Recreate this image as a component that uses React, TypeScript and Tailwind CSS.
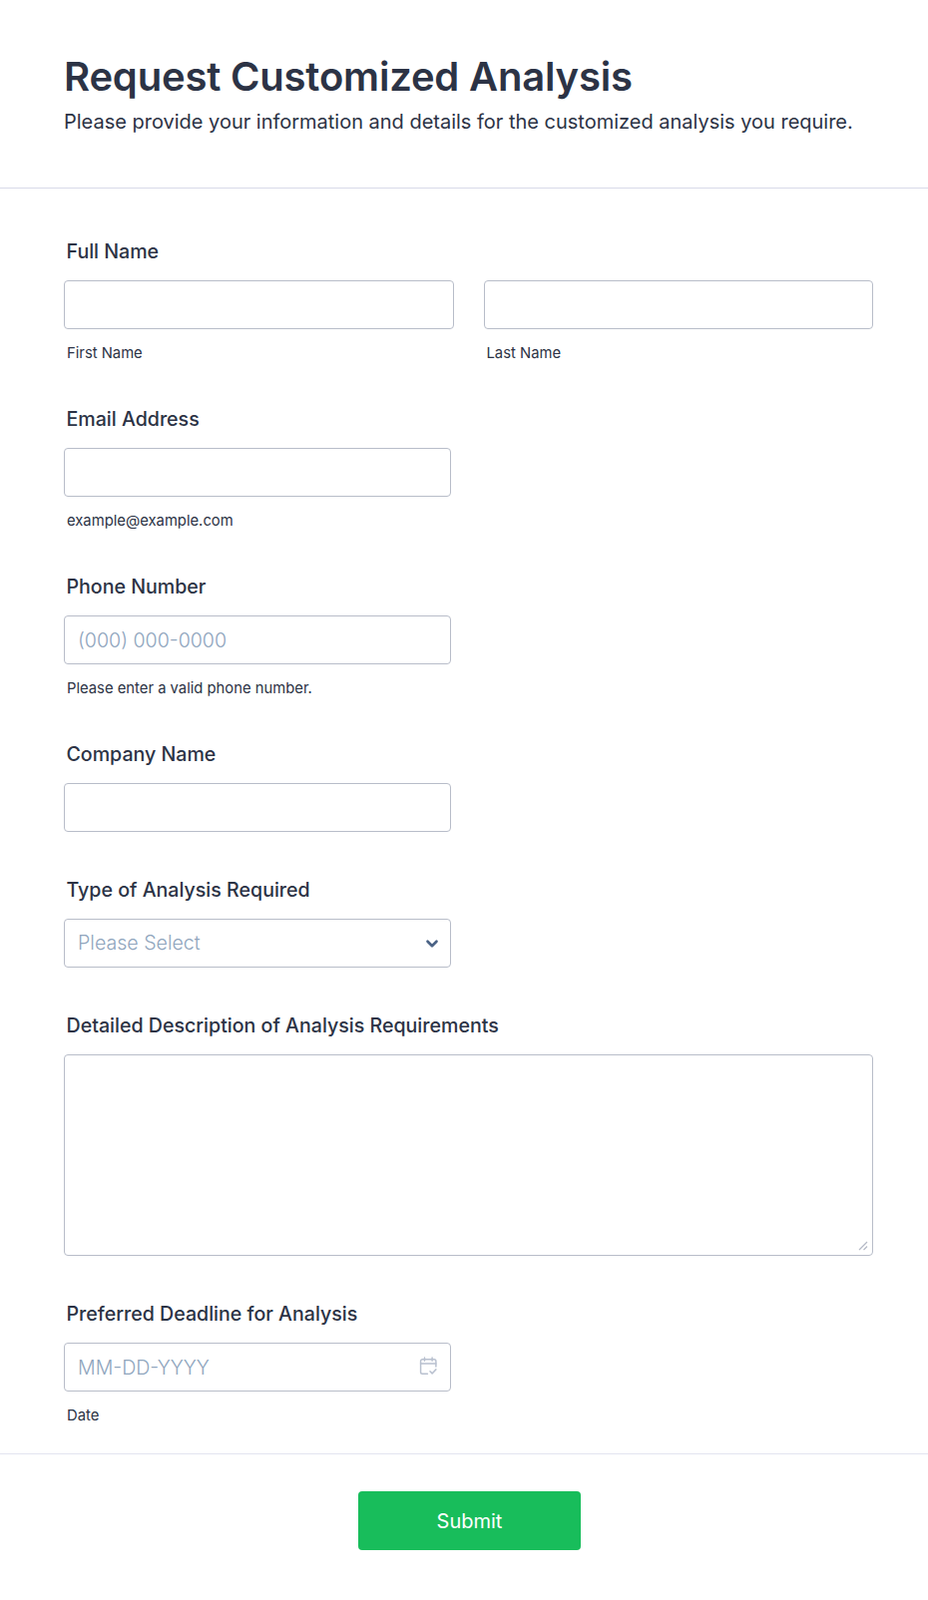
import { ChevronDown } from "lucide-react"

const inputClass =
  "block h-[49px] w-full rounded border border-[#b8bdc9] bg-white px-[13px] text-[19.6px] font-light text-[#2c3345] placeholder:text-[#8fa5bd] outline-none"

function Label({ children }: { children: string }) {
  return <label className="block h-[30px] pl-[2.5px] text-[19.6px] leading-[30px] font-medium text-[#2c3345]">{children}</label>
}

function Hint({ children }: { children: string }) {
  return <p className="mt-[14px] h-[18px] pl-[3px] text-[14.8px] leading-[20px] text-[#2c3345]">{children}</p>
}

function CalendarIcon() {
  return (
    <svg width="19" height="19" viewBox="0 0 18 18" fill="none" stroke="#b8c0cf" strokeWidth="1.4" strokeLinecap="round" strokeLinejoin="round">
      <path d="M8 16.3H3.2a1.7 1.7 0 0 1-1.7-1.7V4.3a1.7 1.7 0 0 1 1.7-1.7h11.1a1.7 1.7 0 0 1 1.7 1.7v5.2" />
      <path d="M1.5 6.6H16" />
      <path d="M5.2 1v3M12.4 1v3" />
      <path d="M10.4 14l2 2 3.6-3.8" />
    </svg>
  )
}

export default function App() {
  return (
    <div className="min-h-[1604px] bg-white font-['Inter',sans-serif] text-[#2c3345]">
      <header className="h-[189px] border-b border-[#d8dae9] px-[64px] pt-[51px]">
        <h1 className="text-[40px] leading-[52px] font-semibold tracking-[-0.19px]">Request Customized Analysis</h1>
        <p className="mt-[4px] text-[20px] leading-[30px] tracking-[-0.01px]">
          Please provide your information and details for the customized analysis you require.
        </p>
      </header>

      <form className="px-[64px] pt-[48px]">
        <section>
          <Label>Full Name</Label>
          <div className="mt-[14px] flex w-[811px] gap-[30px]">
            <div className="w-[390.5px]">
              <input className={inputClass} />
              <Hint>First Name</Hint>
            </div>
            <div className="w-[390.5px]">
              <input className={inputClass} />
              <Hint>Last Name</Hint>
            </div>
          </div>
        </section>

        <section className="mt-[43px] w-[388px]">
          <Label>Email Address</Label>
          <input className={`${inputClass} mt-[14px]`} />
          <Hint>example@example.com</Hint>
        </section>

        <section className="mt-[43px] w-[388px]">
          <Label>Phone Number</Label>
          <input className={`${inputClass} mt-[14px]`} placeholder="(000) 000-0000" />
          <Hint>Please enter a valid phone number.</Hint>
        </section>

        <section className="mt-[43px] w-[388px]">
          <Label>Company Name</Label>
          <input className={`${inputClass} mt-[14px]`} />
        </section>

        <section className="mt-[43px] w-[388px]">
          <Label>Type of Analysis Required</Label>
          <div className="relative mt-[14px]">
            <div className="flex h-[49px] items-center rounded border border-[#b8bdc9] px-[13px] pt-[1px] text-[19.6px] font-light text-[#8fa5bd]">
              Please Select
            </div>
            <ChevronDown className="absolute top-[16px] right-[10px] h-[18px] w-[18px] text-[#4a6285]" strokeWidth={3.5} />
          </div>
        </section>

        <section className="mt-[43px] w-[811px]">
          <Label>Detailed Description of Analysis Requirements</Label>
          <div className="relative mt-[14px]">
            <textarea className="block h-[202px] w-full resize-none rounded border border-[#b8bdc9] outline-none" />
            <svg className="absolute right-[5px] bottom-[5px]" width="10" height="10" viewBox="0 0 10 10" stroke="#b4b9c6" strokeWidth="1.2">
              <path d="M1 9l8-8M5.5 9L9 5.5" />
            </svg>
          </div>
        </section>

        <section className="mt-[43px] w-[388px]">
          <Label>Preferred Deadline for Analysis</Label>
          <div className="relative mt-[14px]">
            <input className={inputClass} placeholder="MM-DD-YYYY" />
            <span className="absolute top-[14px] right-[13px]">
              <CalendarIcon />
            </span>
          </div>
          <Hint>Date</Hint>
        </section>
      </form>

      <footer className="mt-[30px] flex justify-center border-t border-[#e3e4f0] pt-[37px] pl-[11px]">
        <button type="button" className="h-[59px] w-[223px] rounded bg-[#18bd5b] text-[20px] font-normal text-white">
          Submit
        </button>
      </footer>
    </div>
  )
}
